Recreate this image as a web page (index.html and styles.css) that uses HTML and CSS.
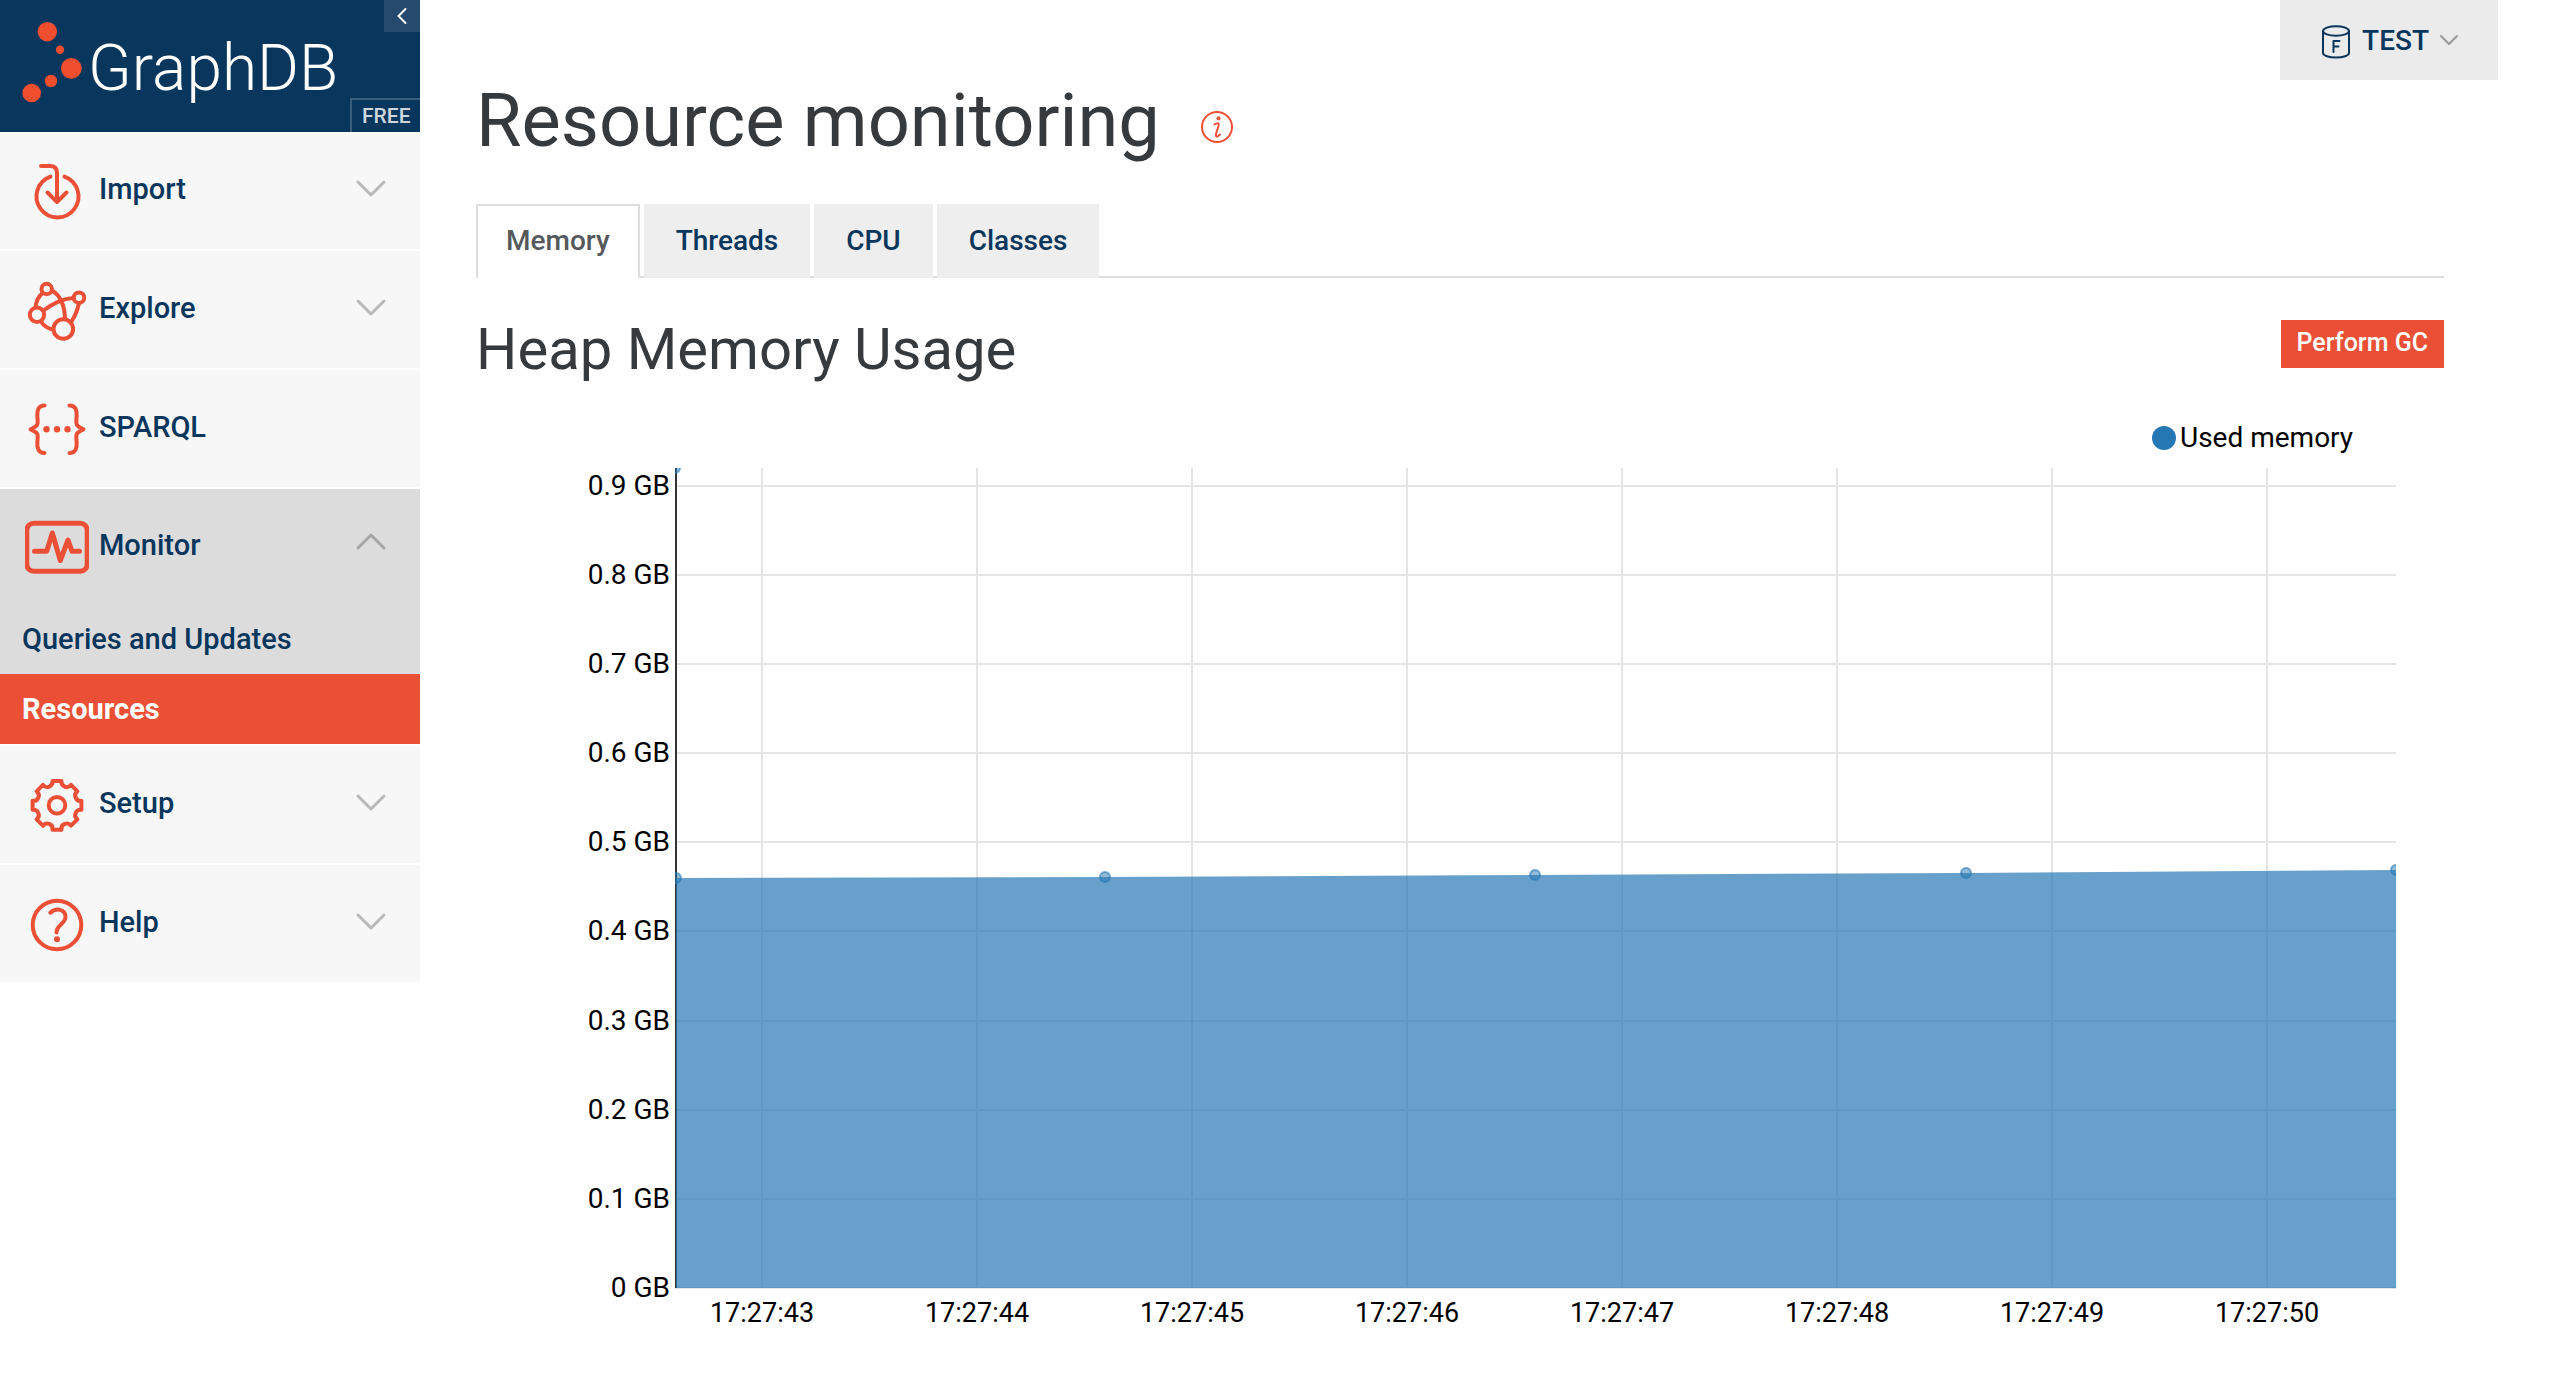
FILE: index.html
```
<!DOCTYPE html>
<html lang="en">
<head>
<meta charset="utf-8">
<title>Resource monitoring | GraphDB Workbench</title>
<link rel="stylesheet" href="styles.css">
</head>
<body>
<div class="layout">
  <aside class="sidebar">
    <div class="brand">
      <a class="brand-link" href="#">
        <svg class="brand-mark" viewBox="0 0 88 132" aria-hidden="true">
          <circle cx="47.3" cy="31.7" r="9.7"/><circle cx="60" cy="49.7" r="4.2"/><circle cx="71.3" cy="68.3" r="10.4"/><circle cx="51" cy="81" r="6.2"/><circle cx="31.7" cy="93" r="9.3"/>
        </svg>
        <span class="brand-name">GraphDB</span>
      </a>
      <button class="collapse" type="button" aria-label="Collapse menu">
        <svg width="12" height="18" viewBox="0 0 12 18"><path d="M9.500 2L2.500 9L9.500 16"/></svg>
      </button>
      <span class="edition">FREE</span>
    </div>
    <nav class="menu">
      <button class="item" type="button">
        <svg class="icon" viewBox="0 0 64 64"><path d="M16 6H25Q32 6 32 13V42M22.500 32.500L32 42L41.500 32.500M25.500 16.600A21 21 0 1 0 39.500 16.600"/></svg>
        <span class="label">Import</span>
        <svg class="chev" viewBox="0 0 32 20"><path d="M3 3L16 16L29 3"/></svg>
      </button>
      <button class="item" type="button">
        <svg class="icon" viewBox="0 0 64 64"><circle cx="21.700" cy="10" r="5.200"/><circle cx="54" cy="18.700" r="5.200"/><circle cx="12" cy="35.700" r="7.200"/><circle cx="38.300" cy="50" r="9.800"/><path d="M17.300 14.300Q11 20 10.700 28M27 11.500Q39.500 19 40 40M18.500 31.500Q34 20 48 19M54 24Q52 34 46.500 42.500M16 42.500Q20 49 28 50.500"/></svg>
        <span class="label">Explore</span>
        <svg class="chev" viewBox="0 0 32 20"><path d="M3 3L16 16L29 3"/></svg>
      </button>
      <a class="item" href="#">
        <svg class="icon" viewBox="0 0 64 64"><path d="M19.500 7.500C13.500 7.500 12 12 12.300 18C13 26 14 27.500 5.500 31.300C14 35 13 36.500 12.300 44.500C12 50.500 13.500 55 19.500 55M44.500 7.500C50.500 7.500 52 12 51.700 18C51 26 50 27.500 58.500 31.300C50 35 51 36.500 51.700 44.500C52 50.500 50.500 55 44.500 55"/><g class="solid"><circle cx="21.500" cy="31.300" r="3.200"/><circle cx="32" cy="31.300" r="3.200"/><circle cx="42.500" cy="31.300" r="3.200"/></g></svg>
        <span class="label">SPARQL</span>
      </a>
      <div class="group">
        <button class="item open" type="button">
          <svg class="icon heavy" viewBox="0 0 64 64"><rect x="1.800" y="7.300" width="60.400" height="48" rx="7"/><path d="M9.500 35.300H21.700L27.300 17L35.300 44.500L43 24L47 35.300H54.500"/></svg>
          <span class="label">Monitor</span>
          <svg class="chev" viewBox="0 0 32 20"><path d="M3 16L16 3L29 16"/></svg>
        </button>
        <a class="sub" href="#">Queries and Updates</a>
        <a class="sub current" href="#" aria-current="page">Resources</a>
      </div>
      <button class="item" type="button">
        <svg class="icon" viewBox="0 0 64 64"><g transform="translate(32 31.300)"><circle r="8.300"/><path d="M4.500-24.400A5.300 5.300 0 0 0 14-20.400L20.400-14A5.300 5.300 0 0 0 24.400-4.500V4.500A5.300 5.300 0 0 0 20.400 14L14 20.400A5.300 5.300 0 0 0 4.500 24.400H-4.500A5.300 5.300 0 0 0-14 20.400L-20.400 14A5.300 5.300 0 0 0-24.400 4.500V-4.500A5.300 5.300 0 0 0-20.400-14L-14-20.400A5.300 5.300 0 0 0-4.500-24.400Z"/></g></svg>
        <span class="label">Setup</span>
        <svg class="chev" viewBox="0 0 32 20"><path d="M3 3L16 16L29 3"/></svg>
      </button>
      <button class="item" type="button">
        <svg class="icon" viewBox="0 0 64 64"><circle cx="32" cy="32" r="24.300"/><path d="M25.300 19.700C31 14.500 40.500 16 40.500 24C40.500 31 31.500 31.500 31.500 39.500"/><g class="solid"><circle cx="32" cy="46.300" r="3"/></g></svg>
        <span class="label">Help</span>
        <svg class="chev" viewBox="0 0 32 20"><path d="M3 3L16 16L29 3"/></svg>
      </button>
    </nav>
  </aside>

  <main class="main">
    <div class="topbar">
      <button class="repo" type="button">
        <svg class="repo-icon" viewBox="0 0 32 38"><ellipse cx="16" cy="8" rx="13" ry="4.800"/><path d="M3 8V30C3 32.500 9 34.600 16 34.600S29 32.500 29 30V8M13.500 29V18H19.500M13.500 23.500H18.500"/></svg>
        <span>TEST</span>
        <svg class="repo-chev" viewBox="0 0 20 12"><path d="M2 2L10 10L18 2"/></svg>
      </button>
    </div>
    <header class="title">
      <h1>Resource monitoring</h1>
      <a class="info" href="#" aria-label="Page information">
        <svg viewBox="0 0 34 34"><circle cx="17" cy="17" r="15"/><path d="M14.500 14.500Q17 13 18.500 13.500Q19 14 18.500 16L16 24Q15.500 27 17.500 26.500L20 24.500"/><circle class="dot" cx="18.500" cy="8.300" r="2"/></svg>
      </a>
    </header>
    <nav class="tabs">
      <a class="tab active" href="#">Memory</a>
      <a class="tab" href="#">Threads</a>
      <a class="tab" href="#">CPU</a>
      <a class="tab" href="#">Classes</a>
    </nav>
    <section>
      <div class="section-head">
        <h2>Heap Memory Usage</h2>
        <button class="gc" type="button">Perform GC</button>
      </div>
      <svg class="chart" viewBox="-1 0 1968 930" role="img" aria-label="Used heap memory over time">
        <defs><clipPath id="plot"><rect x="198" y="58" width="1721" height="821"/></clipPath></defs>
        <circle class="series" cx="1687" cy="28" r="12"/>
        <text x="1703" y="37">Used memory</text>
        <path class="grid" d="M198 76H1919M198 165H1919M198 254H1919M198 343H1919M198 432H1919M198 521H1919M198 611H1919M198 700H1919M198 789H1919M198 878H1919M285 58V878M500 58V878M715 58V878M930 58V878M1145 58V878M1360 58V878M1575 58V878M1790 58V878"/>
        <path class="axis" d="M199 58V878"/>
        <path class="area" d="M199 468L628 467L1058 465L1489 463L1919 460V878H199Z"/>
        <g class="points" clip-path="url(#plot)">
          <circle cx="198" cy="58" r="5"/><circle cx="199" cy="468" r="5"/><circle cx="628" cy="467" r="5"/><circle cx="1058" cy="465" r="5"/><circle cx="1489" cy="463" r="5"/><circle cx="1919" cy="460" r="5"/>
        </g>
        <g class="y-labels">
          <text x="193" y="85">0.9 GB</text><text x="193" y="174">0.8 GB</text><text x="193" y="263">0.7 GB</text><text x="193" y="352">0.6 GB</text><text x="193" y="441">0.5 GB</text><text x="193" y="530">0.4 GB</text><text x="193" y="620">0.3 GB</text><text x="193" y="709">0.2 GB</text><text x="193" y="798">0.1 GB</text><text x="193" y="887">0 GB</text>
        </g>
        <g class="x-labels">
          <text x="285" y="912">17:27:43</text><text x="500" y="912">17:27:44</text><text x="715" y="912">17:27:45</text><text x="930" y="912">17:27:46</text><text x="1145" y="912">17:27:47</text><text x="1360" y="912">17:27:48</text><text x="1575" y="912">17:27:49</text><text x="1790" y="912">17:27:50</text>
        </g>
      </svg>
    </section>
  </main>
</div>
</body>
</html>
```
FILE: styles.css
```
* { box-sizing: border-box; }
body { margin: 0; background: #fff; color: #373a3c; font-family: Roboto, sans-serif; font-size: 28px; }
a { color: inherit; text-decoration: none; }
button { margin: 0; padding: 0; border: 0; background: none; color: inherit; font: inherit; cursor: pointer; }
svg { display: block; flex: none; fill: none; stroke-linecap: round; stroke-linejoin: round; }

.layout { display: flex; align-items: flex-start; }
.sidebar { flex: none; width: 420px; color: #08365c; }

/* Brand */
.brand { position: relative; height: 132px; background: #09365c; }
.brand-link { display: flex; align-items: flex-start; height: 132px; color: #fff; }
.brand-mark { width: 88px; height: 132px; fill: #f04e2f; }
.brand-name { font-size: 64px; font-weight: 300; line-height: 138px; }
.collapse { position: absolute; top: 0; right: 0; display: flex; align-items: center; justify-content: center; width: 36px; height: 32px; background: #264a6d; }
.collapse svg { stroke: #fff; stroke-width: 2; }
.edition { position: absolute; right: 0; bottom: 0; width: 70px; height: 34px; padding-left: 10px; border-top: 2px solid #3a5e7d; border-left: 2px solid #3a5e7d; color: #ced7de; font-size: 21px; font-weight: 500; line-height: 32px; }

/* Menu */
.item { display: flex; align-items: center; gap: 10px; width: 100%; height: 119px; padding: 0 33px 4px 25px; border-bottom: 2px solid #fff; background: #f7f7f7; text-align: left; font-size: 29px; font-weight: 500; }
.item:last-child { height: 117px; border-bottom: 0; }
.label { flex: 1; }
.icon { width: 64px; height: 64px; margin-top: 7px; stroke: #eb5037; stroke-width: 4; }
.icon.heavy { stroke-width: 5; }
.icon .solid { fill: #eb5037; stroke: none; }
.chev { width: 32px; height: 20px; stroke: #b9b9b9; stroke-width: 3; }
.group { border-bottom: 2px solid #fff; background: #dcdcdc; }
.item.open { height: 115px; border-bottom: 0; background: none; }
.item.open .chev { margin-bottom: 6px; stroke: #a6a6a6; }
.sub { display: block; height: 70px; padding-left: 22px; font-size: 29px; font-weight: 500; line-height: 70px; }
.sub.current { background: #eb5037; color: #fff; font-weight: 700; }

/* Page */
.main { flex: 1; min-width: 0; padding: 0 116px 0 56px; }
.topbar { display: flex; justify-content: flex-end; height: 80px; margin-right: -54px; }
.repo { display: flex; align-items: center; gap: 10px; height: 80px; padding: 0 39px 0 40px; background: #ebebeb; color: #08365c; font-weight: 500; }
.repo-icon { width: 32px; height: 38px; margin-top: 4px; stroke: #08365c; stroke-width: 2; }
.repo-chev { width: 20px; height: 12px; stroke: #999; stroke-width: 2; }

.title { display: flex; gap: 40px; height: 80px; }
h1, h2 { margin: 0; font-weight: 400; }
h1 { font-size: 74px; line-height: 82px; }
.info svg { width: 34px; height: 34px; margin-top: 30px; stroke: #f04e36; stroke-width: 2; }
.info .dot { fill: #f04e36; stroke: none; }

.tabs { display: flex; gap: 4px; margin-top: 44px; border-bottom: 2px solid #ddd; }
.tab { height: 74px; margin-bottom: -2px; padding: 0 32px; background: #eee; color: #08365c; font-weight: 500; line-height: 74px; }
.tab.active { padding: 0 28px; border: 2px solid #ddd; border-bottom: 0; background: #fff; color: #55595c; line-height: 70px; }

.section-head { display: flex; align-items: flex-start; justify-content: space-between; height: 56px; margin-top: 42px; }
h2 { font-size: 58px; line-height: 58px; }
.gc { height: 48px; padding: 0 16px 4px; background: #eb5037; color: #fff; font-size: 25px; font-weight: 500; }

/* Chart */
.chart { width: 100%; height: auto; margin-top: 34px; }
.chart text { fill: #000; font-size: 28px; font-weight: 400; }
.chart .y-labels text { text-anchor: end; }
.chart .x-labels text { font-size: 27px; text-anchor: middle; }
.series { fill: #2678b4; }
.grid { stroke: #e5e5e5; stroke-width: 2; stroke-linecap: butt; }
.axis { stroke: #333; stroke-width: 2; stroke-linecap: butt; }
.area { fill: #2678b4; fill-opacity: .7; }
.points { fill: #2678b4; fill-opacity: .5; stroke: #2678b4; stroke-opacity: .6; stroke-width: 2; }
```
